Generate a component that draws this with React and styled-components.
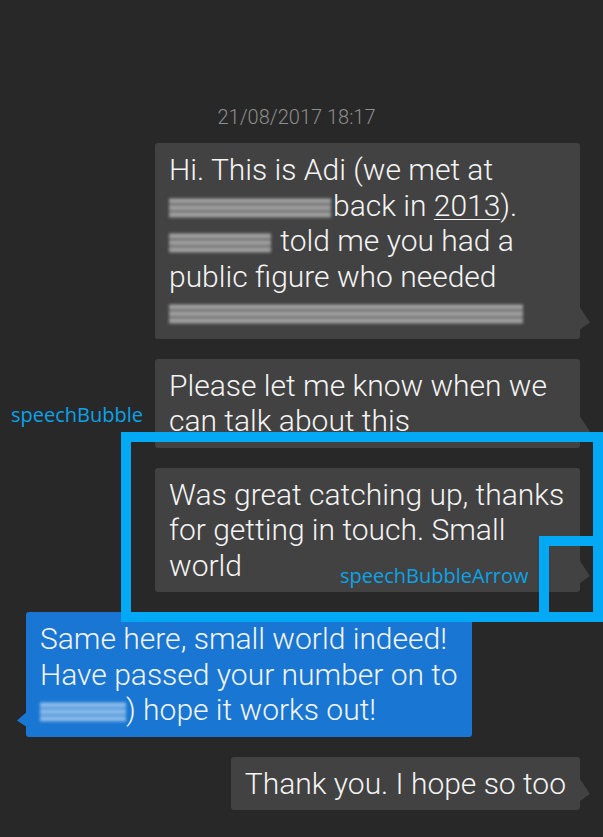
import React from "react";
import styled, { createGlobalStyle, css } from "styled-components";

const GlobalStyle = createGlobalStyle`
  html, body {
    margin: 0;
    padding: 0;
    background: #282828;
  }
  body {
    font-family: Roboto, "Noto Sans", sans-serif;
  }
`;

const Screen = styled.div`
  position: relative;
  width: 603px;
  height: 837px;
  overflow: hidden;
  background: #282828;
  display: flex;
  flex-direction: column;
  padding-top: 105px;
  box-sizing: border-box;
`;

const Timestamp = styled.div`
  text-align: center;
  margin: 0 10px 14px 0;
  font-size: 20px;
  line-height: 24px;
  font-weight: 300;
  color: #8d8d8d;
`;

const Thread = styled.div`
  display: flex;
  flex-direction: column;
  gap: 20px;
`;

const Row = styled.div`
  display: flex;
  justify-content: ${(p) => (p.$incoming ? "flex-start" : "flex-end")};
  padding: ${(p) => (p.$incoming ? "0 0 0 26px" : "0 23px 0 0")};
`;

const Bubble = styled.div`
  position: relative;
  box-sizing: border-box;
  width: ${(p) => (p.$wide ? "425px" : "auto")};
  padding: 9px 14px 9px 14px;
  border-radius: 3px;
  background: ${(p) => (p.$incoming ? "#1976d2" : "#424242")};
  color: #f4f4f4;
  font-size: 30px;
  line-height: 35.5px;
  font-weight: 300;
  white-space: nowrap;

  &::after {
    content: "";
    position: absolute;
    background: inherit;
    ${(p) =>
      p.$incoming
        ? css`
            right: 100%;
            bottom: 10px;
            width: 9px;
            height: 14px;
            clip-path: polygon(100% 0, 0 57%, 100% 100%);
          `
        : css`
            left: 100%;
            bottom: 9px;
            width: 10px;
            height: 22px;
            clip-path: polygon(0 0, 100% 68%, 0 100%);
          `}
  }
`;

const Link = styled.span`
  text-decoration: underline;
  text-underline-offset: 3px;
  text-decoration-thickness: 1px;
`;

const Redacted = styled.span`
  display: inline-block;
  width: ${(p) => p.$w}px;
  height: 20px;
  margin-right: ${(p) => p.$gap || 0}px;
  vertical-align: -2px;
  background: repeating-linear-gradient(
    180deg,
    rgba(255, 255, 255, 0.25) 0px,
    rgba(255, 255, 255, 0.9) 3px,
    rgba(255, 255, 255, 0.3) 5px,
    rgba(255, 255, 255, 0.6) 7px
  );
  filter: blur(1.8px);
  opacity: 0.75;
`;

const Frame = styled.div`
  position: absolute;
  box-sizing: border-box;
  border: 10px solid #03a9f4;
  pointer-events: none;
`;

const Label = styled.div`
  position: absolute;
  font-family: "Open Sans", "Noto Sans", sans-serif;
  font-size: 20px;
  line-height: 24px;
  color: #0ba2e8;
  white-space: nowrap;
`;

export default function App() {
  return (
    <>
      <GlobalStyle />
      <Screen>
        <Timestamp>21/08/2017 18:17</Timestamp>
        <Thread>
          <Row>
            <Bubble $wide>
              Hi. This is Adi (we met at
              <br />
              <Redacted $w={162} $gap={2} />
              back in <Link>2013</Link>).
              <br />
              <Redacted $w={102} $gap={2} /> told me you had a
              <br />
              public figure who needed
              <br />
              <Redacted $w={354} />
            </Bubble>
          </Row>
          <Row>
            <Bubble $wide>
              Please let me know when we
              <br />
              can talk about this
            </Bubble>
          </Row>
          <Row>
            <Bubble $wide>
              Was great catching up, thanks
              <br />
              for getting in touch. Small
              <br />
              world
            </Bubble>
          </Row>
          <Row $incoming>
            <Bubble $incoming>
              Same here, small world indeed!
              <br />
              Have passed your number on to
              <br />
              <Redacted $w={86} />) hope it works out!
            </Bubble>
          </Row>
          <Row>
            <Bubble>Thank you. I hope so too</Bubble>
          </Row>
        </Thread>

        <Frame style={{ left: 121, top: 432, width: 482, height: 190 }} />
        <Frame style={{ left: 539, top: 536, width: 64, height: 86 }} />
        <Label style={{ left: 11, top: 403 }}>speechBubble</Label>
        <Label style={{ left: 340, top: 564 }}>speechBubbleArrow</Label>
      </Screen>
    </>
  );
}
